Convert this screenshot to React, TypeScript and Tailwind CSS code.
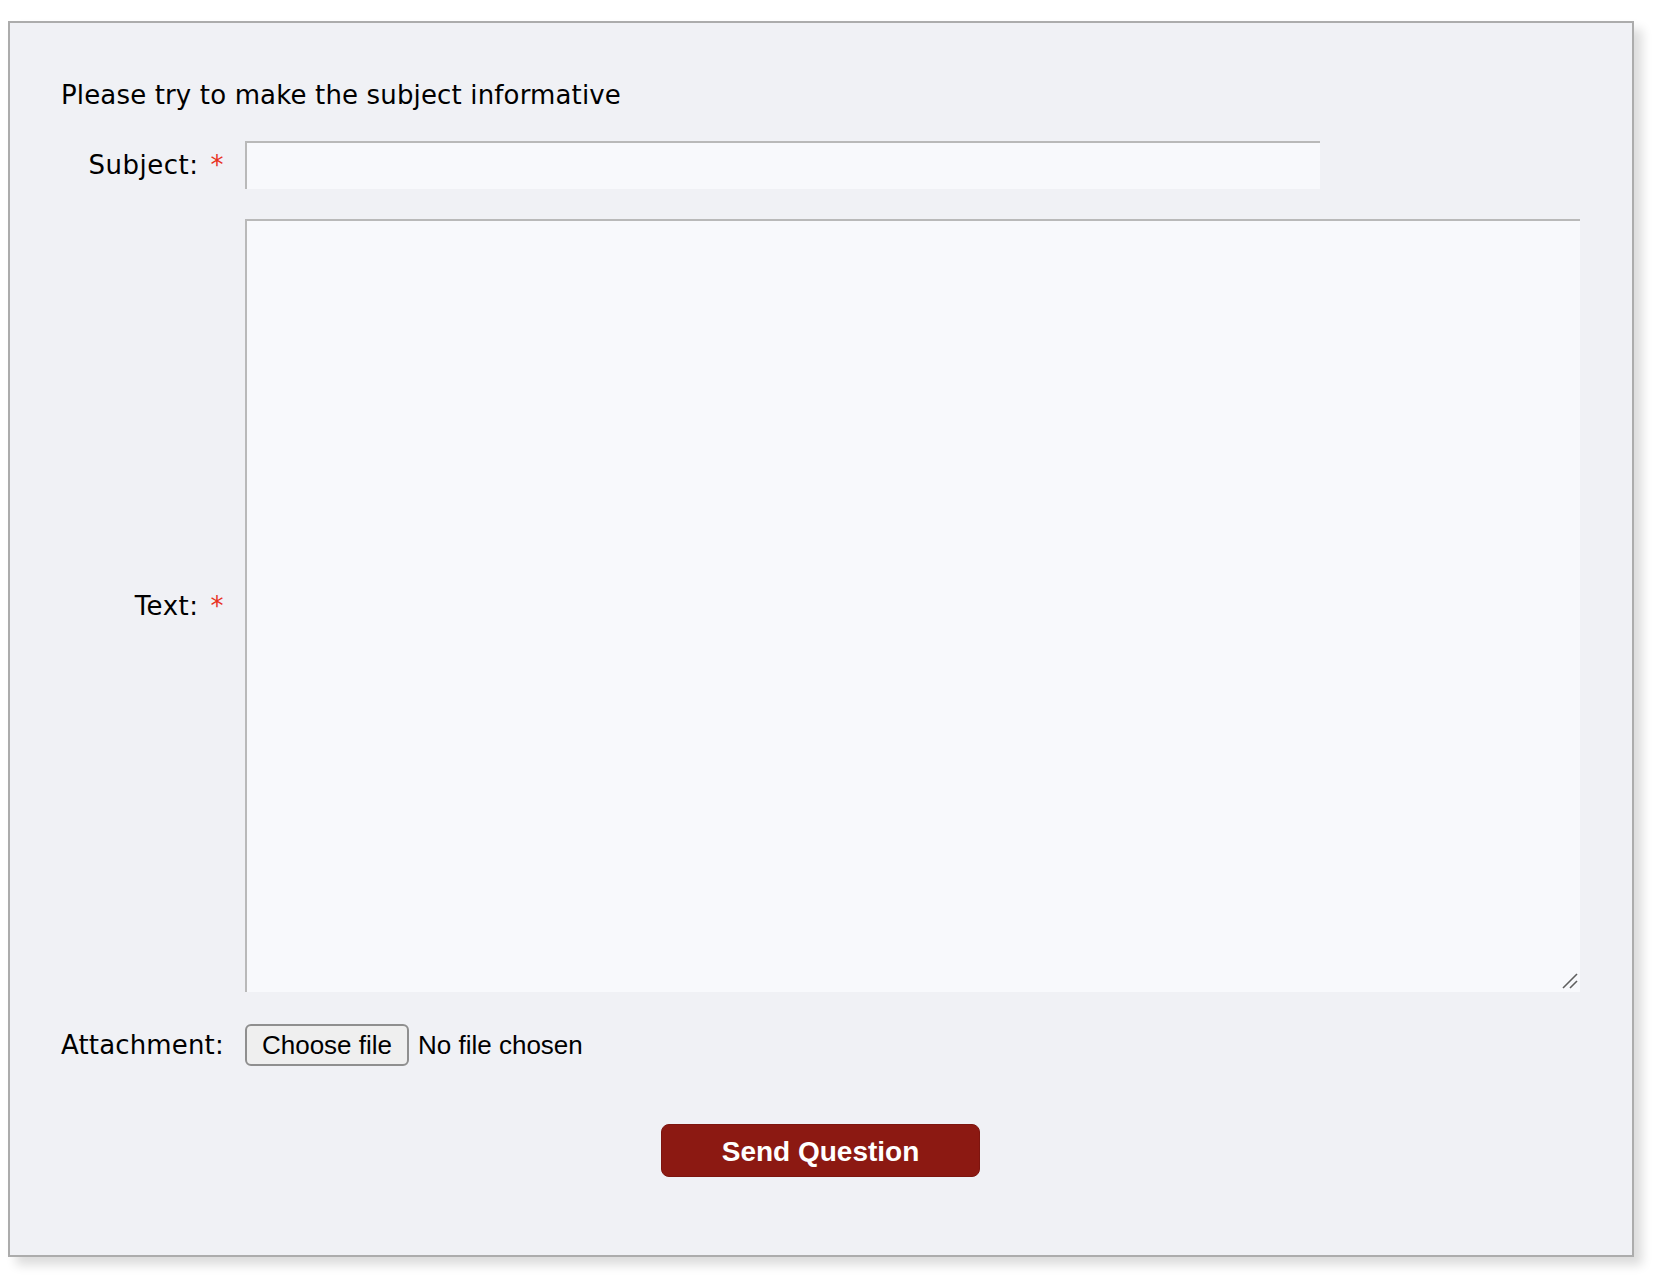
function Required() {
  return <span className="ml-[12px] text-[#e8321e]">*</span>
}

function ResizeGrip() {
  return (
    <svg
      className="absolute right-[2px] bottom-[3px] pointer-events-none"
      width="16"
      height="16"
      viewBox="0 0 16 16"
    >
      <path d="M1 15 L15 1" stroke="#5f5f5f" strokeWidth="1.6" />
      <path d="M8 15 L15 8" stroke="#5f5f5f" strokeWidth="1.6" />
    </svg>
  )
}

export default function App() {
  return (
    <div className="min-h-[1282px] bg-white pt-[21px] pl-[8px]">
      <div className="w-[1626px] h-[1236px] border-2 border-[#acacac] bg-[#f0f1f5] shadow-[8px_8px_10px_rgba(0,0,0,0.14)] pt-[56px] pl-[51px] font-['DejaVu_Sans',Verdana,sans-serif] text-[26px] tracking-[0.15px] text-black">
        <p className="leading-[32px]">Please try to make the subject informative</p>

        <div className="mt-[30px] grid grid-cols-[163px_auto] gap-x-[21px] items-center">
          <label className="text-right leading-[32px] whitespace-nowrap tracking-[0.5px]">
            Subject:<Required />
          </label>
          <input
            type="text"
            className="w-[1075px] h-[48px] bg-[#f8f9fc] border-t-2 border-l-2 border-[#b9b9b9] outline-none px-2"
          />
        </div>

        <div className="mt-[30px] grid grid-cols-[163px_auto] gap-x-[21px] items-center">
          <label className="text-right leading-[32px] whitespace-nowrap tracking-[0.5px]">
            Text:<Required />
          </label>
          <div className="relative w-[1335px] h-[773px]">
            <textarea className="block w-full h-full resize-none bg-[#f8f9fc] border-t-2 border-l-2 border-[#b9b9b9] outline-none p-2" />
            <ResizeGrip />
          </div>
        </div>

        <div className="mt-[32px] grid grid-cols-[163px_auto] gap-x-[21px] items-center">
          <label className="leading-[32px] whitespace-nowrap">Attachment:</label>
          <div className="flex items-center gap-[9px] font-['Liberation_Sans',Arial,sans-serif] text-[26px] tracking-normal">
            <button
              type="button"
              className="w-[164px] h-[42px] rounded-[6px] border-2 border-[#8f8f8f] bg-[#efefef] text-black leading-none"
            >
              Choose file
            </button>
            <span>No file chosen</span>
          </div>
        </div>

        <div className="mt-[58px] flex justify-start pl-[600px]">
          <button
            type="button"
            className="w-[319px] h-[53px] rounded-[8px] bg-[#8c1912] text-white font-bold text-[28px] tracking-normal font-['Liberation_Sans',Arial,sans-serif] border border-[#7d150f] pt-[2px]"
          >
            Send Question
          </button>
        </div>
      </div>
    </div>
  )
}
